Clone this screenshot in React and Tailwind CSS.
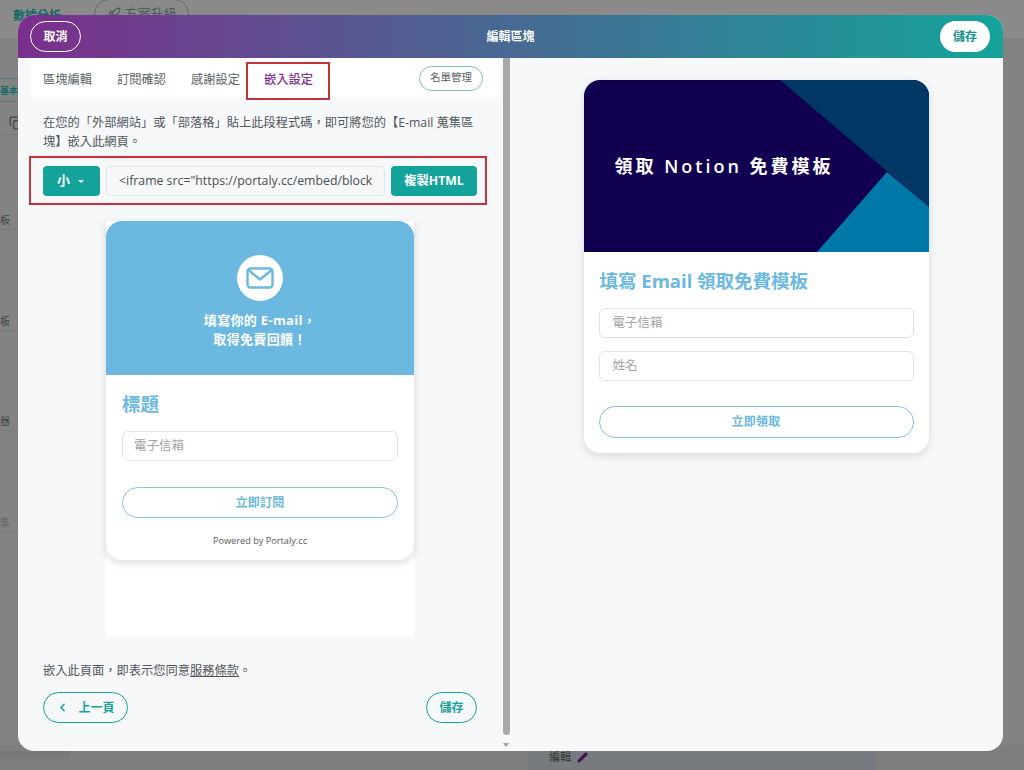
import { ChevronLeft, Copy, Pencil, Rocket } from 'lucide-react';

const font = 'font-["Open_Sans","Noto_Sans_CJK_TC",sans-serif]';

function TextField({ placeholder, className = '' }) {
    return (
        <div className={`flex h-[30px] items-center rounded-md border border-[#dfe3e6] bg-white text-[12.5px] text-[#a3a3a3] ${className}`}>
            {placeholder}
        </div>
    );
}

function OutlineButton({ children, className = '' }) {
    return (
        <div className={`flex items-center justify-center rounded-2xl border border-[#8fc3d8] text-xs font-semibold tracking-wide text-[#6bb8e0] ${className}`}>
            {children}
        </div>
    );
}

function SideRow({ children, className = '' }) {
    return (
        <div className={`flex h-[20px] w-[18px] items-center justify-end overflow-hidden border-b border-[#7a7a7a] pr-[8px] text-[10px] leading-none text-[#3f4545] ${className}`}>
            {children}
        </div>
    );
}

function Backdrop() {
    return (
        <div className="flex h-full w-full flex-col bg-[#838383]">
            <div className="flex h-[39px] shrink-0 items-start gap-[33px] border-b border-[#7d7d7d] bg-[#8a8a8a] pl-[13px]">
                <span className="mt-[7px] text-[12px] font-semibold text-[#0f6b66]">數據分析</span>
                <div className="-mt-px flex h-[30px] w-[95px] items-center justify-center gap-1 rounded-full border border-[#5e6d6d] text-[13px] text-[#4a5a5a]">
                    <Rocket size={14} />
                    方案升級
                </div>
            </div>
            <div className="mt-[39px] flex w-[18px] flex-col text-[10px] leading-none">
                <div className="flex h-[24px] w-full items-center justify-end overflow-hidden border-y border-[#4d7b78] text-[9px] font-semibold whitespace-nowrap text-[#0f6b66]">基本</div>
                <div className="mt-[11px] flex h-[20px] w-[18px] items-center justify-end overflow-hidden"><Copy size={14} className="-mr-[5px] shrink-0 text-[#3f4545]" /></div>
                <div className="mt-[1px] h-px w-full bg-[#7a7a7a]" />
                <SideRow className="mt-[75px]">板</SideRow>
                <SideRow className="mt-[81px]">板</SideRow>
                <SideRow className="mt-[80px]">器</SideRow>
                <SideRow className="mt-[81px] text-[#666]">集</SideRow>
            </div>
            <div className="mt-auto flex h-[25px] items-start bg-[#7e7e7e]">
                <div className="mt-[6px] h-[6px] w-[70px] bg-[#787878]" />
                <div className="ml-[458px] flex h-[25px] w-[348px] items-start gap-[6px] bg-[#777b80] pt-[4px] pl-[21px] text-[11px] text-[#333]">
                    編輯
                    <Pencil size={11} fill="#4a0f50" className="mt-[3px] text-[#4a0f50]" />
                </div>
            </div>
        </div>
    );
}

function LeftPanel() {
    return (
        <div className="flex w-[484px] shrink-0 flex-col">
            <div className="mr-1 ml-3 flex h-10 items-center justify-between rounded-b-sm bg-white pr-[15px] pl-[13px] text-[12.25px] text-[#5a5f63]">
                <div className="flex pt-[4px]">
                    <span className="w-[74px]">區塊編輯</span>
                    <span className="w-[74px]">訂閱確認</span>
                    <span className="w-[73px]">感謝設定</span>
                    <span className="font-medium text-[#7b2f8c]">嵌入設定</span>
                </div>
                <div className="flex h-[25px] w-[64px] items-center justify-center rounded-full border border-[#7cc5bf] text-[10.5px] text-[#5a5f63]">名單管理</div>
            </div>

            <p className="mt-[15px] pr-[24px] pl-[25px] text-[12.25px] leading-[19px] text-[#50565a]">
                在您的「外部網站」或「部落格」貼上此段程式碼，即可將您的【E-mail 蒐集區塊】嵌入此網頁。
            </p>

            <div className="mt-[15px] flex gap-[6px] px-[25px]">
                <div className="flex h-[30px] w-[57px] items-center justify-center gap-[8px] rounded bg-[#14a39b] pr-[2px] text-[13px] font-semibold text-white">
                    小
                    <span className="h-0 w-0 border-x-[3.5px] border-t-[3px] border-x-transparent border-t-white" />
                </div>
                <div className="flex h-[30px] w-[279px] items-center rounded border border-[#e3e6e8] bg-[#f7f8fa] px-[12px] text-[12.3px] whitespace-nowrap text-[#4a4f53]">
                    {'<iframe src="https://portaly.cc/embed/block'}
                </div>
                <div className="flex h-[30px] w-[86px] items-center justify-center rounded bg-[#14a39b] text-[12.25px] font-bold text-white">複製HTML</div>
            </div>

            <div className="mt-[25px] ml-[88px] flex h-[416px] w-[308px] flex-col bg-white">
                <div className="flex h-[339px] flex-col rounded-b-2xl shadow-[0_3px_8px_rgba(0,0,0,0.14)]">
                    <div className="flex h-[154px] flex-col items-center rounded-t-2xl bg-[#6bb8e0] pt-[34px]">
                        <div className="flex h-[46px] w-[46px] items-center justify-center rounded-full bg-white">
                            <svg width="28" height="22" viewBox="0 0 28 22" fill="none" stroke="#6bb8e0" strokeWidth="2.4" strokeLinejoin="round" strokeLinecap="round">
                                <rect x="1.5" y="1.5" width="25" height="19" rx="3" />
                                <path d="M3 3.5 14 12.5 25 3.5" />
                            </svg>
                        </div>
                        <p className="mt-[10px] text-center text-[13px] leading-[19px] font-bold tracking-wide text-white">
                            填寫你的 E-mail，<br />取得免費回饋！
                        </p>
                    </div>
                    <div className="flex flex-col px-4">
                        <h2 className="mt-[16px] text-[18.5px] leading-[26px] font-bold text-[#6bb8e0]">標題</h2>
                        <TextField placeholder="電子信箱" className="mt-[14px] px-[11px]" />
                        <OutlineButton className="mt-[26px] h-[31px]">立即訂閱</OutlineButton>
                        <p className="mt-[16px] text-center text-[9.2px] leading-[14px] text-[#55595c]">Powered by Portaly.cc</p>
                    </div>
                </div>
            </div>

            <p className="mt-[24px] px-[25px] text-[12.25px] leading-[19px] text-[#50565a]">
                嵌入此頁面，即表示您同意<span className="underline">服務條款</span>。
            </p>

            <div className="mt-[12px] flex justify-between px-[25px]">
                <div className="flex h-[31px] w-[85px] items-center justify-center gap-[9px] rounded-full border border-[#14a39b] text-xs font-bold text-[#14a39b]">
                    <ChevronLeft size={13} strokeWidth={3} />
                    上一頁
                </div>
                <div className="flex h-[31px] w-[51px] items-center justify-center rounded-full border border-[#14a39b] text-xs font-bold text-[#14a39b]">儲存</div>
            </div>
        </div>
    );
}

function Scrollbar() {
    return (
        <div className="flex w-[8px] shrink-0 flex-col items-center">
            <div className="h-[677px] w-[7px] rounded-b bg-[#a8a8a8]" />
            <span className="mt-[8px] h-0 w-0 border-x-[3px] border-t-[4px] border-x-transparent border-t-[#a0a0a0]" />
        </div>
    );
}

function RightPanel() {
    return (
        <div className="flex flex-1 justify-center pt-[22px] pr-[1px]">
            <div className="flex h-[373px] w-[345px] flex-col rounded-2xl bg-white shadow-[0_3px_10px_rgba(0,0,0,0.13)]">
                <div className="relative h-[172px] overflow-hidden rounded-t-2xl bg-[#10004f]">
                    <svg className="absolute inset-0" width="345" height="172" viewBox="0 0 345 172">
                        <polygon points="196,0 345,0 345,127" fill="#003764" />
                        <polygon points="303,92 345,127 345,172 233,172" fill="#0079a8" />
                    </svg>
                    <p className="relative mt-[73px] ml-[31px] text-lg leading-[26px] font-semibold tracking-[3px] text-white">領取 Notion 免費模板</p>
                </div>
                <div className="flex flex-col px-[15px]">
                    <h2 className="mt-[16px] ml-px text-[18.5px] leading-[26px] font-bold text-[#6bb8e0]">填寫 Email 領取免費模板</h2>
                    <TextField placeholder="電子信箱" className="mt-[14px] px-[13px]" />
                    <TextField placeholder="姓名" className="mt-[13px] px-[13px]" />
                    <OutlineButton className="mt-[25px] h-8">立即領取</OutlineButton>
                </div>
            </div>
        </div>
    );
}

export default function App() {
    return (
        <div className={`relative h-[770px] w-[1024px] overflow-hidden ${font}`}>
            <Backdrop />
            <div className="absolute top-[15px] left-[18px] flex h-[736px] w-[985px] flex-col overflow-hidden rounded-2xl bg-[#f7f8fa]">
                <div className="flex h-[43px] shrink-0 items-center justify-between bg-linear-to-r/srgb from-[#7b2f8c] to-[#14a39b] pr-[13px] pl-[12px]">
                    <div className="flex h-[31px] w-[51px] items-center justify-center rounded-full border border-white text-xs font-bold text-white">取消</div>
                    <span className="text-xs font-bold text-white">編輯區塊</span>
                    <div className="flex h-[31px] w-[50px] items-center justify-center rounded-full bg-white text-xs font-bold text-[#14908a]">儲存</div>
                </div>
                <div className="flex min-h-0 flex-1">
                    <LeftPanel />
                    <Scrollbar />
                    <RightPanel />
                </div>
            </div>
            {/* annotation boxes drawn on the screenshot */}
            <div className="absolute top-[62px] left-[246px] h-[38px] w-[84px] border-2 border-[#c4323c]" />
            <div className="absolute top-[156px] left-[29px] h-[49px] w-[458px] border-2 border-[#c4323c]" />
        </div>
    );
}
